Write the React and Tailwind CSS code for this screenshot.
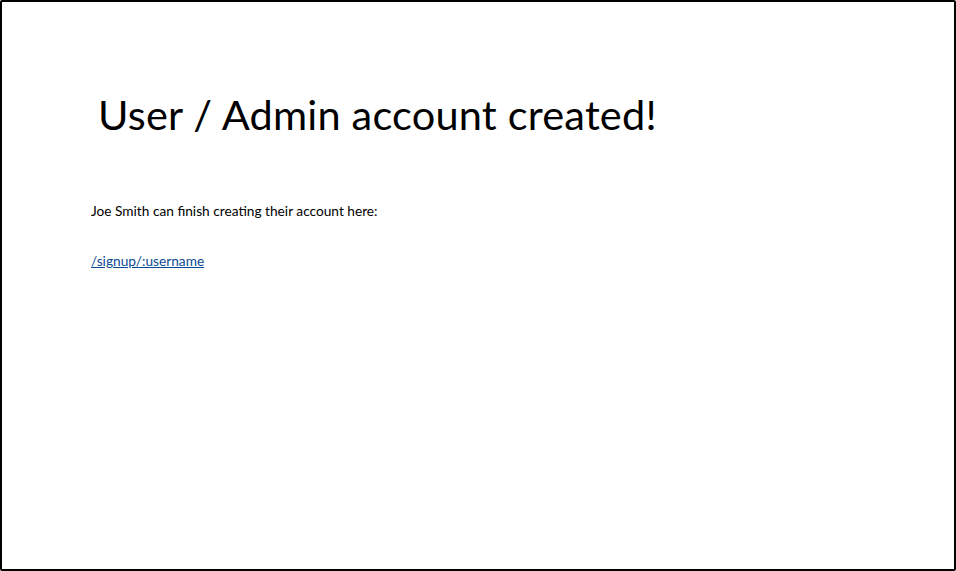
import React from "react";

export default function App() {
  return (
    <div className="w-[956px] h-[571px] bg-white">
      <div className="h-full border-2 border-black rounded-[2px] font-['Lato',sans-serif] text-black">
        <div className="pt-[84px] pl-[96px]">
          <h1 className="text-[41.5px] leading-[56px] font-normal tracking-[0.2px]">
            User / Admin account created!
          </h1>
        </div>
        <div className="pl-[89px] pt-[61px]">
          <p className="text-[13.7px] leading-[16px]">
            Joe Smith can finish creating their account here:
          </p>
          <a
            href="#"
            className="inline-block mt-[34px] text-[13.7px] leading-[16px] text-[#0b4a94] underline"
          >
            /signup/:username
          </a>
        </div>
      </div>
    </div>
  );
}
